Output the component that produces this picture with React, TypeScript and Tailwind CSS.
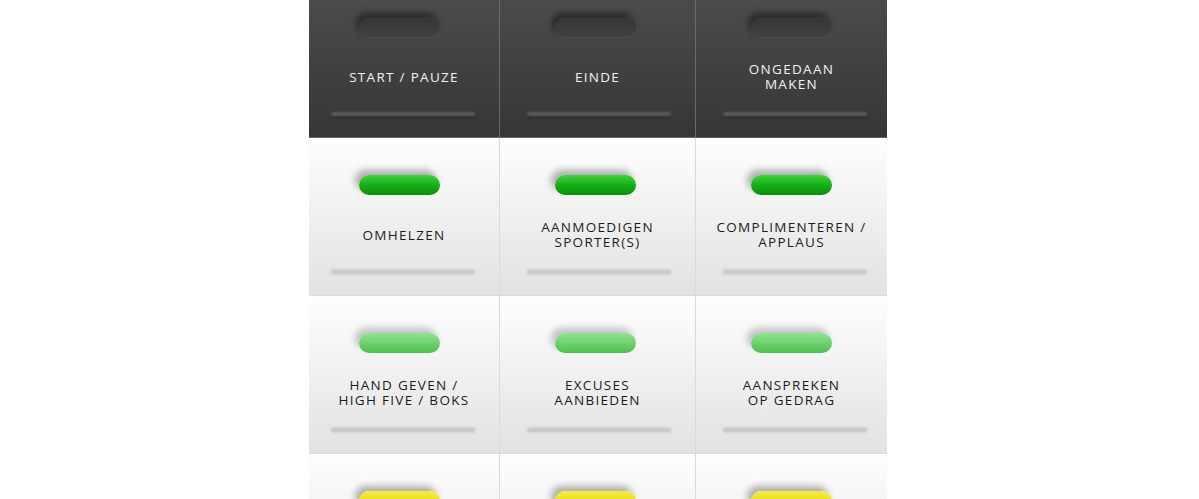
const rows = [
  {
    kind: 'off',
    items: [['START / PAUZE'], ['EINDE'], ['ONGEDAAN', 'MAKEN']],
  },
  {
    kind: 'green',
    items: [['OMHELZEN'], ['AANMOEDIGEN', 'SPORTER(S)'], ['COMPLIMENTEREN /', 'APPLAUS']],
  },
  {
    kind: 'lightgreen',
    items: [['HAND GEVEN /', 'HIGH FIVE / BOKS'], ['EXCUSES', 'AANBIEDEN'], ['AANSPREKEN', 'OP GEDRAG']],
  },
  {
    kind: 'yellow',
    items: [[''], [''], ['']],
  },
];

const lampClass: Record<string, string> = {
  off: 'bg-gradient-to-b from-[#353535] to-[#404040] shadow-[-3px_-4px_6px_rgba(0,0,0,0.45),0_1px_1px_rgba(255,255,255,0.08)]',
  green: 'bg-gradient-to-b from-[#3ad63a] via-[#14b014] to-[#0a8f0a] shadow-[-4px_-5px_7px_rgba(0,0,0,0.3)]',
  lightgreen: 'bg-gradient-to-b from-[#8fe48f] via-[#6dd26d] to-[#52bd52] shadow-[-4px_-5px_7px_rgba(0,0,0,0.22)]',
  yellow: 'bg-gradient-to-b from-[#f4ec3c] via-[#ebe01a] to-[#d6c90c] shadow-[-4px_-5px_7px_rgba(0,0,0,0.3)]',
};

// small per-column nudges, the lamps and bars are not quite centred
const lampMl = ['-ml-[10px]', '-ml-[5px]', 'ml-0'];
const barMl = ['-ml-[3px]', 'ml-[2px]', 'ml-[7px]'];

function Cell({ kind, lines, col }: { kind: string; lines: string[]; col: number }) {
  const dark = kind === 'off';
  return (
    <div
      className={
        'flex h-[158px] flex-col items-center ' +
        (col < 2 ? (dark ? 'border-r border-[#6a6a6a] ' : 'border-r border-[#d2d2d2] ') : '') +
        (dark
          ? 'bg-gradient-to-b from-[#4e4e4e] to-[#363636] border-b border-[#5e5e5e]'
          : 'bg-gradient-to-b from-[#fefefe] to-[#e2e2e2] border-b border-[#dadada]')
      }
    >
      <div className={'mt-[37px] h-[20px] w-[81px] rounded-full ' + lampMl[col] + ' ' + lampClass[kind]} />
      <div
        className={
          'flex h-[75px] flex-col items-center justify-center pt-[5px] text-center text-[13.5px] leading-[15px] tracking-[1.3px] ' +
          (dark ? 'text-[#f2f2f2]' : 'text-[#1c1c1c]')
        }
      >
        {lines.map((l, i) => (
          <div key={i}>{l}</div>
        ))}
      </div>
      <div
        className={
          'h-[4px] w-[144px] rounded-full blur-[1px] ' +
          barMl[col] +
          ' ' +
          (dark ? 'bg-[#5e5e5e] shadow-[0_1px_3px_rgba(0,0,0,0.4)]' : 'bg-[#c6c6c6] shadow-[0_0_3px_rgba(0,0,0,0.12)]')
        }
      />
    </div>
  );
}

export default function App() {
  return (
    <div className="h-[499px] w-[1199px] overflow-hidden bg-white" style={{ fontFamily: '"Open Sans", "DejaVu Sans", sans-serif' }}>
      <div className="-mt-[20px] ml-[309px] grid w-[578px] grid-cols-[191px_196px_191px]">
        {rows.map((r) =>
          r.items.map((lines, c) => <Cell key={r.kind + c} kind={r.kind} lines={lines} col={c} />)
        )}
      </div>
    </div>
  );
}
